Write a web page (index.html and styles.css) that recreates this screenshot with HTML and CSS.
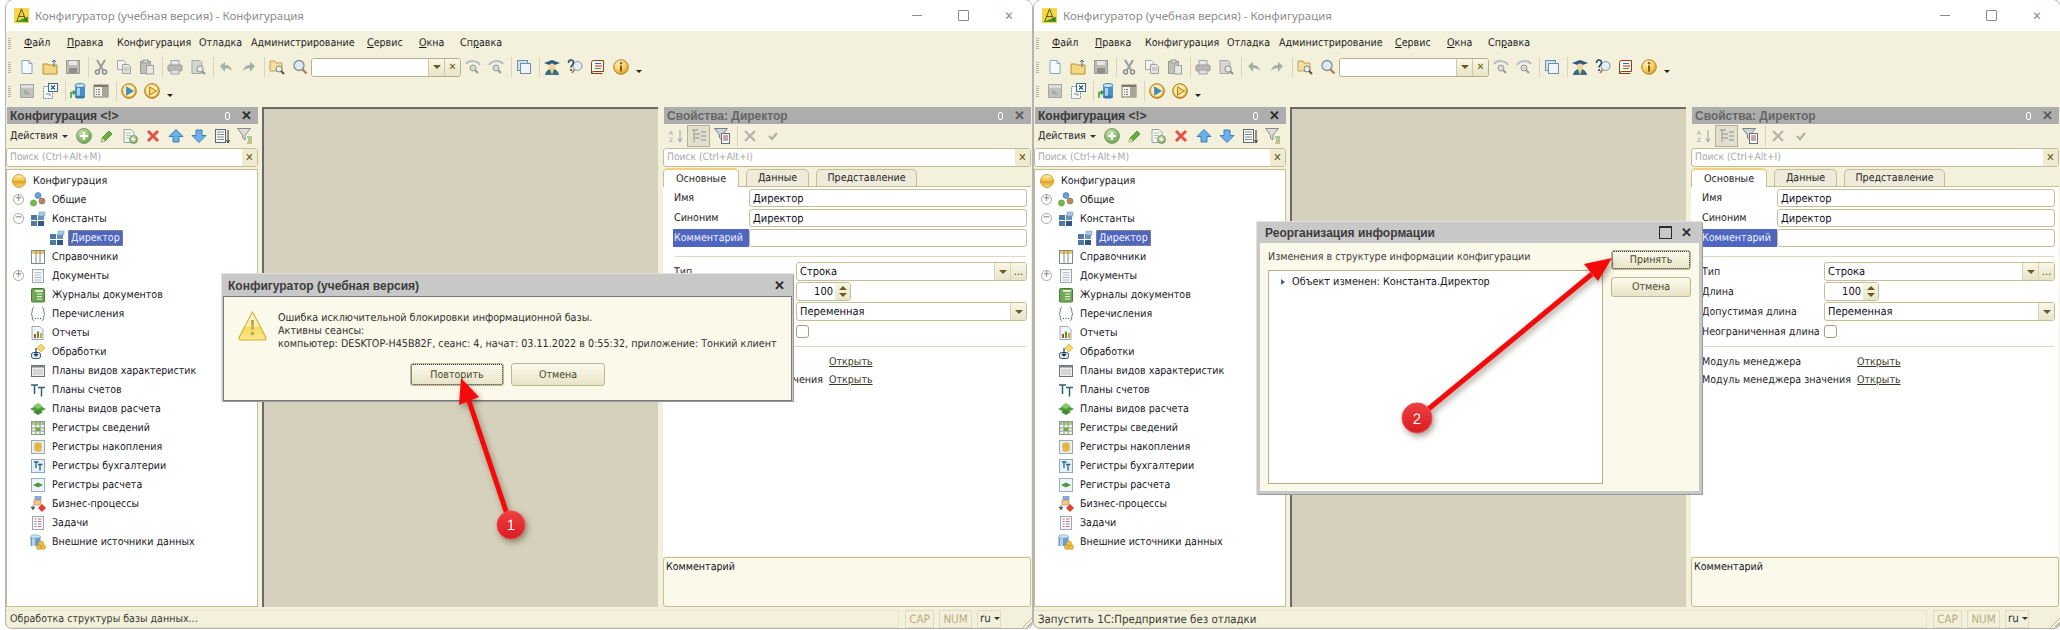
FILE: index.html
```html
<!DOCTYPE html>
<html>
<head>
  <meta charset="utf-8">
  <title>Конфигуратор</title>
  <link rel="stylesheet" href="styles.css">
</head>
<body>

<!-- icon sprite -->
<svg class="sprite" xmlns="http://www.w3.org/2000/svg">
  <defs>
    <radialGradient id="gold" cx="0.4" cy="0.3" r="0.8"><stop offset="0" stop-color="#fff6c8"/><stop offset="0.6" stop-color="#f2c64e"/><stop offset="1" stop-color="#c98a1c"/></radialGradient>
    <radialGradient id="green" cx="0.4" cy="0.3" r="0.8"><stop offset="0" stop-color="#c8e8a8"/><stop offset="1" stop-color="#5f9a45"/></radialGradient>
    <linearGradient id="ball" x1="0" y1="0" x2="0" y2="1"><stop offset="0" stop-color="#fdf3c0"/><stop offset="0.5" stop-color="#f0c040"/><stop offset="0.55" stop-color="#e0a020"/><stop offset="1" stop-color="#f6dc80"/></linearGradient>
    <linearGradient id="warn" x1="0" y1="0" x2="0" y2="1"><stop offset="0" stop-color="#fff9d8"/><stop offset="0.5" stop-color="#fbf0b0"/><stop offset="0.55" stop-color="#f5dc60"/><stop offset="1" stop-color="#f8e68c"/></linearGradient>
    <linearGradient id="redball" x1="0" y1="0" x2="0" y2="1"><stop offset="0" stop-color="#ee4044"/><stop offset="1" stop-color="#d81c22"/></linearGradient>
  </defs>
  <symbol id="i-logo" viewBox="0 0 16 16"><rect width="16" height="16" fill="#f4d84a"/><path d="M1 15 15 15 15 9 8 12z" fill="#4a9a20"/><path d="M8 1 3 14M8 1l5 13M5 9h6" stroke="#5a4a10" fill="none"/></symbol>
  <symbol id="i-new" viewBox="0 0 16 16"><path d="M3 1.5h7l3 3v10H3z" fill="#f6fafd" stroke="#8aa6bf"/><path d="M10 1.5v3h3" fill="#dbe7f1" stroke="#8aa6bf"/></symbol>
  <symbol id="i-open" viewBox="0 0 16 16"><path d="M1 5h5l1 1h8v9H1z" fill="#f3d680" stroke="#b5923a"/><path d="M12 8V1M10 3l2-2 2 2" stroke="#3f6f8f" fill="none"/></symbol>
  <symbol id="i-save" viewBox="0 0 16 16"><rect x="1.5" y="1.5" width="13" height="13" fill="#bcbcb4" stroke="#9a9a94"/><rect x="4" y="2" width="8" height="4" fill="#e6e6e0"/><rect x="4" y="9" width="8" height="5" fill="#8f8f8a"/></symbol>
  <symbol id="i-cut" viewBox="0 0 16 16"><path d="M4 1l6 10M12 1 6 11" stroke="#9c9c9c" stroke-width="2" fill="none"/><circle cx="4.5" cy="13" r="2" fill="none" stroke="#8c8c94" stroke-width="1.5"/><circle cx="11.5" cy="13" r="2" fill="none" stroke="#8c8c94" stroke-width="1.5"/></symbol>
  <symbol id="i-copy" viewBox="0 0 16 16"><path d="M1.5 1.5h6l2 2v7h-8z" fill="#f2f2ee" stroke="#a8a8a8"/><path d="M6.5 5.5h6l2 2v7h-8z" fill="#e4e4e0" stroke="#a0a0a0"/><path d="M8 9h5M8 11h5" stroke="#b0b0b0"/></symbol>
  <symbol id="i-paste" viewBox="0 0 16 16"><rect x="1.5" y="2.5" width="10" height="12" fill="#c0c0b8" stroke="#9c9c96"/><rect x="4" y="1" width="5" height="3" fill="#d8d8d4" stroke="#9c9c96"/><rect x="7.5" y="6.5" width="7" height="8.5" fill="#e6e6e2" stroke="#a0a0a0"/></symbol>
  <symbol id="i-print" viewBox="0 0 16 16"><rect x="4" y="1.5" width="8" height="5" fill="#e8e8e4" stroke="#a4a4a4"/><rect x="1" y="6" width="14" height="6" rx="1" fill="#b8b8b4" stroke="#9a9a98"/><rect x="4" y="11" width="8" height="4" fill="#e0e0dc" stroke="#a4a4a4"/></symbol>
  <symbol id="i-preview" viewBox="0 0 16 16"><path d="M2 1.5h8l2 2v11H2z" fill="#d6d6d2" stroke="#a8a8a8"/><circle cx="10" cy="10" r="3.2" fill="#e8e8e4" stroke="#8c8c8c"/><path d="M12.5 12.5 15 15" stroke="#8c8c8c" stroke-width="2"/></symbol>
  <symbol id="i-undo" viewBox="0 0 16 16"><path d="M2 7l5-4v3c4 0 6 2 7 6-2-2-4-3-7-2.500V13z" fill="#a6b0a6"/></symbol>
  <symbol id="i-redo" viewBox="0 0 16 16"><path d="M14 7 9 3v3c-4 0-6 2-7 6 2-2 4-3 7-2.500V13z" fill="#a6b0a6"/></symbol>
  <symbol id="i-find" viewBox="0 0 16 16"><path d="M1 2h5l1 2h6v8H1z" fill="#f3e0a0" stroke="#c0a050"/><circle cx="10" cy="10" r="3" fill="#e8f0f4" stroke="#808080"/><path d="M12 12l3 3" stroke="#705030" stroke-width="2"/></symbol>
  <symbol id="i-search" viewBox="0 0 16 16"><circle cx="7" cy="6.500" r="5" fill="#dceaf6" stroke="#8a8a90" stroke-width="1.300"/><path d="M10.500 10.500l4 4" stroke="#b08050" stroke-width="2.400"/></symbol>
  <symbol id="i-prev" viewBox="0 0 16 16"><path d="M1 5C4 1 12 1 15 6" fill="none" stroke="#b4bcc4" stroke-width="2"/><circle cx="8" cy="9" r="3" fill="#d8d8d8" stroke="#989898"/><path d="M10 11l3 3" stroke="#989898" stroke-width="2"/></symbol>
  <symbol id="i-next" viewBox="0 0 16 16"><path d="M15 5C12 1 4 1 1 6" fill="none" stroke="#b4bcc4" stroke-width="2"/><circle cx="8" cy="9" r="3" fill="#d8d8d8" stroke="#989898"/><path d="M10 11l3 3" stroke="#989898" stroke-width="2"/></symbol>
  <symbol id="i-win" viewBox="0 0 16 16"><rect x="1.500" y="1.500" width="10" height="10" fill="#cfe0ee" stroke="#6f8fa8"/><rect x="4.500" y="4.500" width="10" height="10" fill="#eef4f9" stroke="#6f8fa8"/></symbol>
  <symbol id="i-scholar" viewBox="0 0 16 16"><path d="M0 4 8 1l8 3-8 3z" fill="#2a5a78"/><circle cx="8" cy="7.500" r="3" fill="#f4d2a8"/><path d="M1 16c1-5 4-6 7-6s6 1 7 6z" fill="#3a6a88"/><path d="M6 10l2 6 2-6z" fill="#f4e060"/></symbol>
  <symbol id="i-helpfind" viewBox="0 0 16 16"><circle cx="10.500" cy="7" r="4.500" fill="#e0ecf6" stroke="#909090"/><path d="M7.500 10.500 5 14" stroke="#b08050" stroke-width="2"/><path d="M1.500 4C1.500 0 6.500 0 6.500 3.500 6.500 6 4 6 4 8.500M4 10v2" stroke="#2a4a68" stroke-width="1.600" fill="none"/></symbol>
  <symbol id="i-book" viewBox="0 0 16 16"><path d="M3.500 1.500h10v11h-10a2 2 0 0 0-2 2v-11a2 2 0 0 1 2-2zM1.500 14.500h11" fill="#fbf6e8" stroke="#8a4020"/><path d="M5 4.500h6" stroke="#2a70c0"/><path d="M5 7h7" stroke="#c03030"/><path d="M5 9.500h6" stroke="#30a040"/></symbol>
  <symbol id="i-info" viewBox="0 0 16 16"><circle cx="8" cy="8" r="7.300" fill="url(#gold)" stroke="#b08840"/><rect x="7" y="6.500" width="2" height="6" fill="#8a5a10"/><circle cx="8" cy="4.300" r="1.200" fill="#8a5a10"/></symbol>
  <symbol id="i-treegrey" viewBox="0 0 16 16"><rect x="1.500" y="1.500" width="13" height="13" fill="#c2c2bc" stroke="#a6a6a2"/><rect x="2" y="2" width="12" height="3" fill="#dcdcd8"/><path d="M6 7v4h5M6 9h3" stroke="#9a9a96" fill="none"/></symbol>
  <symbol id="i-xdoc" viewBox="0 0 16 16"><path d="M1.500 3.500h9v12h-9z" fill="#f8fafa" stroke="#7a8c9a" stroke-dasharray="2 1"/><rect x="6.500" y="0.500" width="9" height="8" fill="#fff" stroke="#3a6a8a"/><path d="M9 2.500l4 4M13 2.500l-4 4" stroke="#2a5a7a" stroke-width="1.300"/><path d="M4 11h4v2" stroke="#808080" fill="none"/></symbol>
  <symbol id="i-db" viewBox="0 0 16 16"><rect x="5" y="2" width="10" height="12" fill="#4a90c8"/><rect x="7" y="2" width="3" height="12" fill="#a8d4ee"/><ellipse cx="10" cy="2.500" rx="5" ry="2" fill="#cfe8f6" stroke="#3f7fb0"/><ellipse cx="10" cy="14" rx="5" ry="1.500" fill="#3a78a8"/><path d="M1 15V9.500h3M3 7.500 5 9.500 3 11.500" stroke="#3c9a3c" stroke-width="1.500" fill="none"/></symbol>
  <symbol id="i-layout" viewBox="0 0 16 16"><rect x="1" y="2" width="14" height="12" fill="#f2f2ea" stroke="#7a7a70"/><rect x="1" y="2" width="14" height="2" fill="#807868"/><rect x="9" y="4" width="6" height="10" fill="#a8a498"/><path d="M3 6.500h1M5 6.500h2M3 9h1M5 9h2M3 11.500h1M5 11.500h2" stroke="#707068"/></symbol>
  <symbol id="i-play" viewBox="0 0 16 16"><circle cx="8" cy="8" r="7.300" fill="url(#gold)" stroke="#a87820"/><circle cx="8" cy="8" r="5.500" fill="#fdf0b8"/><path d="M5.500 3.800v8.400L12.500 8z" fill="#3f8fd0" stroke="#2868a0" stroke-width="0.500"/></symbol>
  <symbol id="i-play2" viewBox="0 0 16 16"><circle cx="8" cy="8" r="7.300" fill="url(#gold)" stroke="#a87820"/><circle cx="8" cy="8" r="5.500" fill="#fdf0b8"/><path d="M5.500 3.800v8.400L12.500 8z" fill="#f6d868" stroke="#b08020"/></symbol>
  <symbol id="i-plus" viewBox="0 0 16 16"><circle cx="8" cy="8" r="7.500" fill="url(#green)" stroke="#8a9a80"/><path d="M8 4v8M4 8h8" stroke="#fff" stroke-width="2.200"/></symbol>
  <symbol id="i-pencil" viewBox="0 0 16 16"><path d="M2 14l1-4 7-7 3 3-7 7z" fill="#68b040" stroke="#3f7f28" stroke-width="0.800"/><path d="M2 14l1-4 3 3z" fill="#f4e0a8"/></symbol>
  <symbol id="i-docplus" viewBox="0 0 16 16"><path d="M2 1.500h7l3 3v10H2z" fill="#f4f6f4" stroke="#9aa49a"/><path d="M4 5h5M4 7.500h5M4 10h3" stroke="#b8c0b8"/><circle cx="11.500" cy="11.500" r="4" fill="url(#green)" stroke="#8a9a80"/><path d="M11.500 9.500v4M9.500 11.500h4" stroke="#fff" stroke-width="1.300"/></symbol>
  <symbol id="i-x" viewBox="0 0 16 16"><path d="M3 3l10 10M13 3 3 13" stroke="#e4504a" stroke-width="3"/></symbol>
  <symbol id="i-up" viewBox="0 0 16 16"><path d="M8 1.500 15 8.500H11V14H5V8.500H1z" fill="#6cb0e8" stroke="#3f7eb8"/></symbol>
  <symbol id="i-down" viewBox="0 0 16 16"><path d="M8 14.500 15 7.500H11V2H5V7.500H1z" fill="#6cb0e8" stroke="#3f7eb8"/></symbol>
  <symbol id="i-list" viewBox="0 0 16 16"><rect x="1.500" y="1.500" width="10" height="13" fill="#fbfbf8" stroke="#5a6a70"/><path d="M3 4h7M3 6.500h7M3 9h7M3 11.500h7" stroke="#7a8a90"/><path d="M14 2v12M12.500 12 14 15 15.500 12" stroke="#303030" fill="none"/></symbol>
  <symbol id="i-filter" viewBox="0 0 16 16"><path d="M0.500 0.500h13L8 7v5L5.500 10V7z" fill="#dcdcd8" stroke="#8a8a88"/><path d="M10 9h5M11 11h4M11 13h4" stroke="#5fa050"/><path d="M10 15h5" stroke="#c08030"/></symbol>
  <symbol id="i-az" viewBox="0 0 16 16"><path d="M12 2v11M10 10.500 12 14 14 10.500" stroke="#9aa0a0" fill="none"/></symbol>
  <symbol id="i-treegrid" viewBox="0 0 16 16"><path d="M1 2h6M3 2v12M3 6h6M3 10h6M10 4h5M10 8h5M10 12h5" stroke="#a4aaa8" stroke-width="1.300" fill="none"/></symbol>
  <symbol id="i-filterdoc" viewBox="0 0 16 16"><path d="M0.500 0.500h13L8 7v5L5.500 10V7z" fill="#cfd4d8" stroke="#7a8088"/><rect x="7.500" y="5.500" width="8" height="10" fill="#fff" stroke="#6a7078"/><path d="M9 8h5M9 10h5" stroke="#c04040"/><path d="M9 12h5" stroke="#4060a0"/></symbol>
  <symbol id="i-xgrey" viewBox="0 0 16 16"><path d="M3 3l10 10M13 3 3 13" stroke="#b8b0ac" stroke-width="2.200"/></symbol>
  <symbol id="i-check" viewBox="0 0 16 16"><path d="M4 8l3 3 5-6" stroke="#a8b8a4" stroke-width="2.200" fill="none"/></symbol>
  <symbol id="i-conf" viewBox="0 0 16 16"><circle cx="8" cy="8" r="6.500" fill="url(#ball)" stroke="#caa040"/></symbol>
  <symbol id="i-common" viewBox="0 0 16 16"><circle cx="8" cy="3.500" r="3" fill="#68a0d8" stroke="#4878a8" stroke-width="0.600"/><circle cx="3.500" cy="11" r="3" fill="#70c050" stroke="#4a9030" stroke-width="0.600"/><circle cx="12" cy="9" r="3" fill="#b88860" stroke="#8a6040" stroke-width="0.600"/></symbol>
  <symbol id="i-const" viewBox="0 0 16 16"><rect x="1" y="4" width="6" height="5" fill="#5078a0"/><rect x="1" y="10" width="6" height="5" fill="#5078a0"/><rect x="8" y="4" width="6" height="5" fill="#6a94bc"/><rect x="8" y="10" width="6" height="5" fill="#2f5a88"/><rect x="9" y="1" width="6" height="4" fill="#a8c8e4" stroke="#6a94bc" stroke-width="0.500"/></symbol>
  <symbol id="i-cat" viewBox="0 0 16 16"><rect x="1.500" y="1.500" width="13" height="13" fill="#fff" stroke="#7a8a90"/><rect x="2" y="2" width="12" height="3" fill="#f0cc60"/><path d="M6 2v12M10 2v12" stroke="#7a8a90"/></symbol>
  <symbol id="i-docs" viewBox="0 0 16 16"><rect x="2.500" y="1.500" width="11" height="13" fill="#f4f6f8" stroke="#9aa8b4"/><path d="M4.500 4.500h7M4.500 7h7M4.500 9.500h7M4.500 12h7" stroke="#b4c0c8"/></symbol>
  <symbol id="i-journal" viewBox="0 0 16 16"><rect x="1.500" y="1.500" width="13" height="13.500" rx="1" fill="#70a858" stroke="#467a38"/><rect x="5" y="3" width="8" height="2" fill="#dcecc8"/><path d="M7 7h5M7 9.500h5M7 12h5" stroke="#e4f0d8"/></symbol>
  <symbol id="i-enum" viewBox="0 0 16 16"><path d="M4 1.500C1.500 1.500 3 7 1 8c2 1 .5 6.500 3 6.500M12 1.500C14.500 1.500 13 7 15 8c-2 1-.5 6.500-3 6.500" stroke="#5a7080" fill="none"/><path d="M5 12.500h1M7.500 12.500h1M10 12.500h1" stroke="#3a4a58"/></symbol>
  <symbol id="i-report" viewBox="0 0 16 16"><path d="M2 1.500h8l3 3v10H2z" fill="#f4f6f8" stroke="#98a8b8"/><rect x="4" y="9" width="2" height="4" fill="#d04030"/><rect x="7" y="6.500" width="2" height="6.500" fill="#40a040"/><rect x="10" y="8" width="2" height="5" fill="#e0a030"/></symbol>
  <symbol id="i-proc" viewBox="0 0 16 16"><path d="M11 0l4 4-4 4-4-4z" fill="#f4d860" stroke="#c8a030" stroke-width="0.600"/><rect x="1.500" y="8.500" width="9" height="6" rx="2" fill="#dce8f0" stroke="#305878"/><path d="M6 4v8M4 10l2 2 2-2" stroke="#203850" stroke-width="1.200" fill="none"/></symbol>
  <symbol id="i-pvh" viewBox="0 0 16 16"><rect x="1.500" y="2.500" width="13" height="11" fill="#eeeeea" stroke="#6a7078"/><rect x="1.500" y="2.500" width="13" height="2" fill="#7a8490"/><path d="M4 6.500v6M6 6.500v6M8 6.500v6M10 6.500v6M12 6.500v6" stroke="#8a9098" stroke-dasharray="1 1"/></symbol>
  <symbol id="i-chart" viewBox="0 0 16 16"><path d="M1 3h7M4.500 3v9M8 5.500h7M11.500 5.500v9" stroke="#2f6080" stroke-width="1.500" fill="none"/></symbol>
  <symbol id="i-calc" viewBox="0 0 16 16"><path d="M0 8l8-4 8 4-8 4z" fill="#4f9a40"/><path d="M3 5l5-3 5 3-5 3z" fill="#8ac868"/><path d="M3 11l5-2 5 2-5 3z" fill="#3f8a30"/></symbol>
  <symbol id="i-regs" viewBox="0 0 16 16"><rect x="1.500" y="1.500" width="13" height="13" fill="#eef4e4" stroke="#8a9a88"/><rect x="2" y="2" width="12" height="3" fill="#a8c890"/><path d="M6 2v12M10 2v12M2 8h12M2 11h12" stroke="#8a9a88"/><rect x="6" y="8" width="4" height="3" fill="#70a850"/></symbol>
  <symbol id="i-regn" viewBox="0 0 16 16"><rect x="1.500" y="1.500" width="13" height="13" fill="#e8f0f6" stroke="#9aaab8"/><ellipse cx="8" cy="5.500" rx="3.500" ry="1.800" fill="#f0c040" stroke="#c09020" stroke-width="0.500"/><ellipse cx="8" cy="8" rx="3.500" ry="1.800" fill="#f0c040" stroke="#c09020" stroke-width="0.500"/><ellipse cx="8" cy="10.500" rx="3.500" ry="1.800" fill="#f0c040" stroke="#c09020" stroke-width="0.500"/></symbol>
  <symbol id="i-regb" viewBox="0 0 16 16"><rect x="1.500" y="1.500" width="13" height="13" fill="#e4f0f8" stroke="#8aa8c0"/><path d="M4 4h4.500M6 4v6M8 6.500h4.500M10 6.500v6" stroke="#2f6080" stroke-width="1.300" fill="none"/></symbol>
  <symbol id="i-regr" viewBox="0 0 16 16"><rect x="1.500" y="1.500" width="13" height="13" fill="#eef4f8" stroke="#9ab0c0"/><path d="M3 8l5-2.500L13 8l-5 2.500z" fill="#4f9a40"/></symbol>
  <symbol id="i-bp" viewBox="0 0 16 16"><rect x="5" y="0.500" width="6" height="3" fill="#80b0e0" stroke="#5080b0" stroke-width="0.500"/><rect x="4" y="4" width="7" height="5" fill="#f6c890" stroke="#b08050" stroke-width="0.600"/><path d="M3 9v3M1 11l2 3 2-3z" fill="#505a68" stroke="#505a68" stroke-width="0.600"/><path d="M12 8l4 4-4 4-4-4z" fill="#e04030"/></symbol>
  <symbol id="i-task" viewBox="0 0 16 16"><rect x="2.500" y="1.500" width="11" height="13" fill="#f6f8fa" stroke="#9aa8b8"/><path d="M4.500 4h2M8 4h3.500M4.500 6.500h2M8 6.500h3.500M4.500 9h2M8 9h3.500M4.500 11.500h2M8 11.500h3.500" stroke="#c07080"/></symbol>
  <symbol id="i-ext" viewBox="0 0 16 16"><rect x="0.500" y="2" width="10" height="10" fill="#6a9ccc"/><rect x="2" y="2" width="3" height="10" fill="#b4d4ec"/><ellipse cx="5.500" cy="2.500" rx="5" ry="1.800" fill="#cce0f0" stroke="#5a8cb8" stroke-width="0.500"/><circle cx="9" cy="13" r="2.500" fill="#f0c040" stroke="#b08020" stroke-width="0.500"/><circle cx="13" cy="13" r="2.500" fill="#f0c040" stroke="#b08020" stroke-width="0.500"/><circle cx="11" cy="9.500" r="2.500" fill="#f0c040" stroke="#b08020" stroke-width="0.500"/></symbol>
  <symbol id="i-warn" viewBox="0 0 29 30"><path d="M14.500 1 28 26.500a2 2 0 0 1-2 2.500H3a2 2 0 0 1-2-2.500z" fill="url(#warn)" stroke="#d8b040" stroke-width="1.200" stroke-linejoin="round"/><path d="M13 9h3l-.7 10h-1.600z" fill="#b8a050"/><circle cx="14.500" cy="22.500" r="1.800" fill="#b8a050"/></symbol>
</svg>

<!-- window 1 -->
<div class="window first">
  <div class="titlebar">
    <svg class="logo"><use href="#i-logo"/></svg>
    <span class="title-text">Конфигуратор (учебная версия) - Конфигурация</span>
    <span class="win-btn min"></span><span class="win-btn max"></span><span class="win-btn close">✕</span>
  </div>
  <div class="menubar">
    <span class="grip"></span>
    <span class="menu-item"><u>Ф</u>айл</span><span class="menu-item"><u>П</u>равка</span><span class="menu-item">Конфигурация</span><span class="menu-item">Отладка</span><span class="menu-item">Администрирование</span><span class="menu-item"><u>С</u>ервис</span><span class="menu-item"><u>О</u>кна</span><span class="menu-item">Сп<u>р</u>авка</span>
  </div>
  <div class="toolbar">
    <span class="grip"></span>
    <span class="tb"><svg class="ic"><use href="#i-new"/></svg></span><span class="tb"><svg class="ic"><use href="#i-open"/></svg></span><span class="tb"><svg class="ic"><use href="#i-save"/></svg></span><span class="sep"></span>
    <span class="tb"><svg class="ic"><use href="#i-cut"/></svg></span><span class="tb"><svg class="ic"><use href="#i-copy"/></svg></span><span class="tb"><svg class="ic"><use href="#i-paste"/></svg></span><span class="sep"></span>
    <span class="tb"><svg class="ic"><use href="#i-print"/></svg></span><span class="tb"><svg class="ic"><use href="#i-preview"/></svg></span><span class="sep"></span>
    <span class="tb"><svg class="ic"><use href="#i-undo"/></svg></span><span class="tb"><svg class="ic"><use href="#i-redo"/></svg></span><span class="sep"></span>
    <span class="tb"><svg class="ic"><use href="#i-find"/></svg></span><span class="tb"><svg class="ic"><use href="#i-search"/></svg></span>
    <span class="combo"><span class="combo-input"></span><span class="combo-btn"><span class="arrow"></span></span><span class="combo-btn x">✕</span></span>
    <span class="tb"><svg class="ic"><use href="#i-prev"/></svg></span><span class="tb"><svg class="ic"><use href="#i-next"/></svg></span><span class="sep"></span>
    <span class="tb"><svg class="ic"><use href="#i-win"/></svg></span><span class="sep"></span>
    <span class="tb"><svg class="ic"><use href="#i-scholar"/></svg></span><span class="tb"><svg class="ic"><use href="#i-helpfind"/></svg></span><span class="tb"><svg class="ic"><use href="#i-book"/></svg></span><span class="tb"><svg class="ic"><use href="#i-info"/></svg></span><span class="more"></span>
  </div>
  <div class="toolbar tall">
    <span class="grip"></span>
    <span class="tb"><svg class="ic"><use href="#i-treegrey"/></svg></span><span class="tb"><svg class="ic"><use href="#i-xdoc"/></svg></span><span class="sep"></span>
    <span class="tb"><svg class="ic"><use href="#i-db"/></svg></span><span class="tb"><svg class="ic"><use href="#i-layout"/></svg></span><span class="sep"></span>
    <span class="tb"><svg class="ic"><use href="#i-play"/></svg></span><span class="tb"><svg class="ic"><use href="#i-play2"/></svg></span><span class="more"></span>
  </div>
  <div class="workspace">
    <div class="pane left-pane">
      <div class="pane-head"><span>Конфигурация &lt;!&gt;</span><span class="pin"></span><span class="pane-x">✕</span></div>
      <div class="pane-tools">
        <span class="actions">Действия<span class="arrow"></span></span>
        <span class="tb"><svg class="ic"><use href="#i-plus"/></svg></span><span class="tb"><svg class="ic"><use href="#i-pencil"/></svg></span><span class="tb"><svg class="ic"><use href="#i-docplus"/></svg></span><span class="tb"><svg class="ic"><use href="#i-x"/></svg></span><span class="tb"><svg class="ic"><use href="#i-up"/></svg></span><span class="tb"><svg class="ic"><use href="#i-down"/></svg></span><span class="tb"><svg class="ic"><use href="#i-list"/></svg></span><span class="tb"><svg class="ic"><use href="#i-filter"/></svg></span>
      </div>
      <div class="search"><span class="search-text">Поиск (Ctrl+Alt+M)</span><span class="search-x">✕</span></div>
      <div class="tree">
        <div class="row"><svg class="ic"><use href="#i-conf"/></svg>Конфигурация</div>
        <div class="row lvl1"><span class="toggle">+</span><svg class="ic"><use href="#i-common"/></svg>Общие</div>
        <div class="row lvl1"><span class="toggle">−</span><svg class="ic"><use href="#i-const"/></svg>Константы</div>
        <div class="row lvl2"><svg class="ic"><use href="#i-const"/></svg><span class="selected">Директор</span></div>
        <div class="row lvl1"><svg class="ic"><use href="#i-cat"/></svg>Справочники</div>
        <div class="row lvl1"><span class="toggle">+</span><svg class="ic"><use href="#i-docs"/></svg>Документы</div>
        <div class="row lvl1"><svg class="ic"><use href="#i-journal"/></svg>Журналы документов</div>
        <div class="row lvl1"><svg class="ic"><use href="#i-enum"/></svg>Перечисления</div>
        <div class="row lvl1"><svg class="ic"><use href="#i-report"/></svg>Отчеты</div>
        <div class="row lvl1"><svg class="ic"><use href="#i-proc"/></svg>Обработки</div>
        <div class="row lvl1"><svg class="ic"><use href="#i-pvh"/></svg>Планы видов характеристик</div>
        <div class="row lvl1"><svg class="ic"><use href="#i-chart"/></svg>Планы счетов</div>
        <div class="row lvl1"><svg class="ic"><use href="#i-calc"/></svg>Планы видов расчета</div>
        <div class="row lvl1"><svg class="ic"><use href="#i-regs"/></svg>Регистры сведений</div>
        <div class="row lvl1"><svg class="ic"><use href="#i-regn"/></svg>Регистры накопления</div>
        <div class="row lvl1"><svg class="ic"><use href="#i-regb"/></svg>Регистры бухгалтерии</div>
        <div class="row lvl1"><svg class="ic"><use href="#i-regr"/></svg>Регистры расчета</div>
        <div class="row lvl1"><svg class="ic"><use href="#i-bp"/></svg>Бизнес-процессы</div>
        <div class="row lvl1"><svg class="ic"><use href="#i-task"/></svg>Задачи</div>
        <div class="row lvl1"><svg class="ic"><use href="#i-ext"/></svg>Внешние источники данных</div>
      </div>
    </div>
    <div class="mdi"></div>
    <div class="pane right-pane">
      <div class="pane-head inactive"><span>Свойства: Директор</span><span class="pin"></span><span class="pane-x">✕</span></div>
      <div class="pane-tools">
        <span class="tb"><svg class="ic" viewBox="0 0 16 16"><use href="#i-az"/><text class="az" x="1" y="6.500">A</text><text class="az" x="1" y="13.500">Z</text></svg></span><span class="tb pressed"><svg class="ic"><use href="#i-treegrid"/></svg></span><span class="tb"><svg class="ic"><use href="#i-filterdoc"/></svg></span><span class="sep"></span>
        <span class="tb"><svg class="ic"><use href="#i-xgrey"/></svg></span><span class="tb"><svg class="ic"><use href="#i-check"/></svg></span>
      </div>
      <div class="search"><span class="search-text">Поиск (Ctrl+Alt+I)</span><span class="search-x">✕</span></div>
      <div class="tabs"><span class="tab active">Основные</span><span class="tab data">Данные</span><span class="tab view">Представление</span></div>
      <div class="form">
        <div class="frow"><span class="flabel">Имя</span><span class="field wide">Директор</span></div>
        <div class="frow"><span class="flabel">Синоним</span><span class="field wide">Директор</span></div>
        <div class="frow"><span class="flabel hilite">Комментарий</span><span class="field wide"></span></div>
        <div class="hr"></div>
        <div class="frow low"><span class="flabel long">Тип</span><span class="field grow">Строка<span class="field-btn end"><span class="arrow"></span></span><span class="field-btn dots">...</span></span></div>
        <div class="frow low"><span class="flabel long">Длина</span><span class="field spin">100<span class="spin-btn"><span class="arrow up"></span><span class="arrow"></span></span></span></div>
        <div class="frow low"><span class="flabel long">Допустимая длина</span><span class="field grow">Переменная<span class="field-btn end"><span class="arrow"></span></span></span></div>
        <div class="frow low"><span class="flabel long">Неограниченная длина</span><span class="check"></span></div>
        <div class="hr second"></div>
        <div class="frow link-row"><span class="flabel link-label">Модуль менеджера</span><a class="link">Открыть</a></div>
        <div class="frow link-row"><span class="flabel link-label">Модуль менеджера значения</span><a class="link">Открыть</a></div>
      </div>
      <div class="comment">Комментарий</div>
    </div>
  </div>
  <div class="statusbar">
    <span class="status-text">Обработка структуры базы данных...</span>
    <span class="status-box cap">CAP</span><span class="status-box num">NUM</span><span class="status-box lang">ru<span class="arrow"></span></span>
    <span class="sizegrip"></span>
  </div>

  <div class="dialog alert">
    <div class="dialog-head"><span>Конфигуратор (учебная версия)</span><span class="dialog-x">✕</span></div>
    <div class="dialog-body">
      <div class="alert-msg">
        <svg class="warn-ic"><use href="#i-warn"/></svg>
        <div class="alert-text">Ошибка исключительной блокировки информационной базы.<br>Активны сеансы:<br>компьютер: DESKTOP-H45B82F, сеанс: 4, начат: 03.11.2022 в 0:55:32, приложение: Тонкий клиент</div>
      </div>
      <div class="alert-btns"><span class="btn focus">Повторить</span><span class="btn">Отмена</span></div>
    </div>
  </div>
</div>

<!-- window 2 -->
<div class="window second">
  <div class="titlebar">
    <svg class="logo"><use href="#i-logo"/></svg>
    <span class="title-text">Конфигуратор (учебная версия) - Конфигурация</span>
    <span class="win-btn min"></span><span class="win-btn max"></span><span class="win-btn close">✕</span>
  </div>
  <div class="menubar">
    <span class="grip"></span>
    <span class="menu-item"><u>Ф</u>айл</span><span class="menu-item"><u>П</u>равка</span><span class="menu-item">Конфигурация</span><span class="menu-item">Отладка</span><span class="menu-item">Администрирование</span><span class="menu-item"><u>С</u>ервис</span><span class="menu-item"><u>О</u>кна</span><span class="menu-item">Сп<u>р</u>авка</span>
  </div>
  <div class="toolbar">
    <span class="grip"></span>
    <span class="tb"><svg class="ic"><use href="#i-new"/></svg></span><span class="tb"><svg class="ic"><use href="#i-open"/></svg></span><span class="tb"><svg class="ic"><use href="#i-save"/></svg></span><span class="sep"></span>
    <span class="tb"><svg class="ic"><use href="#i-cut"/></svg></span><span class="tb"><svg class="ic"><use href="#i-copy"/></svg></span><span class="tb"><svg class="ic"><use href="#i-paste"/></svg></span><span class="sep"></span>
    <span class="tb"><svg class="ic"><use href="#i-print"/></svg></span><span class="tb"><svg class="ic"><use href="#i-preview"/></svg></span><span class="sep"></span>
    <span class="tb"><svg class="ic"><use href="#i-undo"/></svg></span><span class="tb"><svg class="ic"><use href="#i-redo"/></svg></span><span class="sep"></span>
    <span class="tb"><svg class="ic"><use href="#i-find"/></svg></span><span class="tb"><svg class="ic"><use href="#i-search"/></svg></span>
    <span class="combo"><span class="combo-input"></span><span class="combo-btn"><span class="arrow"></span></span><span class="combo-btn x">✕</span></span>
    <span class="tb"><svg class="ic"><use href="#i-prev"/></svg></span><span class="tb"><svg class="ic"><use href="#i-next"/></svg></span><span class="sep"></span>
    <span class="tb"><svg class="ic"><use href="#i-win"/></svg></span><span class="sep"></span>
    <span class="tb"><svg class="ic"><use href="#i-scholar"/></svg></span><span class="tb"><svg class="ic"><use href="#i-helpfind"/></svg></span><span class="tb"><svg class="ic"><use href="#i-book"/></svg></span><span class="tb"><svg class="ic"><use href="#i-info"/></svg></span><span class="more"></span>
  </div>
  <div class="toolbar tall">
    <span class="grip"></span>
    <span class="tb"><svg class="ic"><use href="#i-treegrey"/></svg></span><span class="tb"><svg class="ic"><use href="#i-xdoc"/></svg></span><span class="sep"></span>
    <span class="tb"><svg class="ic"><use href="#i-db"/></svg></span><span class="tb"><svg class="ic"><use href="#i-layout"/></svg></span><span class="sep"></span>
    <span class="tb"><svg class="ic"><use href="#i-play"/></svg></span><span class="tb"><svg class="ic"><use href="#i-play2"/></svg></span><span class="more"></span>
  </div>
  <div class="workspace">
    <div class="pane left-pane">
      <div class="pane-head"><span>Конфигурация &lt;!&gt;</span><span class="pin"></span><span class="pane-x">✕</span></div>
      <div class="pane-tools">
        <span class="actions">Действия<span class="arrow"></span></span>
        <span class="tb"><svg class="ic"><use href="#i-plus"/></svg></span><span class="tb"><svg class="ic"><use href="#i-pencil"/></svg></span><span class="tb"><svg class="ic"><use href="#i-docplus"/></svg></span><span class="tb"><svg class="ic"><use href="#i-x"/></svg></span><span class="tb"><svg class="ic"><use href="#i-up"/></svg></span><span class="tb"><svg class="ic"><use href="#i-down"/></svg></span><span class="tb"><svg class="ic"><use href="#i-list"/></svg></span><span class="tb"><svg class="ic"><use href="#i-filter"/></svg></span>
      </div>
      <div class="search"><span class="search-text">Поиск (Ctrl+Alt+M)</span><span class="search-x">✕</span></div>
      <div class="tree">
        <div class="row"><svg class="ic"><use href="#i-conf"/></svg>Конфигурация</div>
        <div class="row lvl1"><span class="toggle">+</span><svg class="ic"><use href="#i-common"/></svg>Общие</div>
        <div class="row lvl1"><span class="toggle">−</span><svg class="ic"><use href="#i-const"/></svg>Константы</div>
        <div class="row lvl2"><svg class="ic"><use href="#i-const"/></svg><span class="selected">Директор</span></div>
        <div class="row lvl1"><svg class="ic"><use href="#i-cat"/></svg>Справочники</div>
        <div class="row lvl1"><span class="toggle">+</span><svg class="ic"><use href="#i-docs"/></svg>Документы</div>
        <div class="row lvl1"><svg class="ic"><use href="#i-journal"/></svg>Журналы документов</div>
        <div class="row lvl1"><svg class="ic"><use href="#i-enum"/></svg>Перечисления</div>
        <div class="row lvl1"><svg class="ic"><use href="#i-report"/></svg>Отчеты</div>
        <div class="row lvl1"><svg class="ic"><use href="#i-proc"/></svg>Обработки</div>
        <div class="row lvl1"><svg class="ic"><use href="#i-pvh"/></svg>Планы видов характеристик</div>
        <div class="row lvl1"><svg class="ic"><use href="#i-chart"/></svg>Планы счетов</div>
        <div class="row lvl1"><svg class="ic"><use href="#i-calc"/></svg>Планы видов расчета</div>
        <div class="row lvl1"><svg class="ic"><use href="#i-regs"/></svg>Регистры сведений</div>
        <div class="row lvl1"><svg class="ic"><use href="#i-regn"/></svg>Регистры накопления</div>
        <div class="row lvl1"><svg class="ic"><use href="#i-regb"/></svg>Регистры бухгалтерии</div>
        <div class="row lvl1"><svg class="ic"><use href="#i-regr"/></svg>Регистры расчета</div>
        <div class="row lvl1"><svg class="ic"><use href="#i-bp"/></svg>Бизнес-процессы</div>
        <div class="row lvl1"><svg class="ic"><use href="#i-task"/></svg>Задачи</div>
        <div class="row lvl1"><svg class="ic"><use href="#i-ext"/></svg>Внешние источники данных</div>
      </div>
    </div>
    <div class="mdi"></div>
    <div class="pane right-pane">
      <div class="pane-head inactive"><span>Свойства: Директор</span><span class="pin"></span><span class="pane-x">✕</span></div>
      <div class="pane-tools">
        <span class="tb"><svg class="ic" viewBox="0 0 16 16"><use href="#i-az"/><text class="az" x="1" y="6.500">A</text><text class="az" x="1" y="13.500">Z</text></svg></span><span class="tb pressed"><svg class="ic"><use href="#i-treegrid"/></svg></span><span class="tb"><svg class="ic"><use href="#i-filterdoc"/></svg></span><span class="sep"></span>
        <span class="tb"><svg class="ic"><use href="#i-xgrey"/></svg></span><span class="tb"><svg class="ic"><use href="#i-check"/></svg></span>
      </div>
      <div class="search"><span class="search-text">Поиск (Ctrl+Alt+I)</span><span class="search-x">✕</span></div>
      <div class="tabs"><span class="tab active">Основные</span><span class="tab data">Данные</span><span class="tab view">Представление</span></div>
      <div class="form">
        <div class="frow"><span class="flabel">Имя</span><span class="field wide">Директор</span></div>
        <div class="frow"><span class="flabel">Синоним</span><span class="field wide">Директор</span></div>
        <div class="frow"><span class="flabel hilite">Комментарий</span><span class="field wide"></span></div>
        <div class="hr"></div>
        <div class="frow low"><span class="flabel long">Тип</span><span class="field grow">Строка<span class="field-btn end"><span class="arrow"></span></span><span class="field-btn dots">...</span></span></div>
        <div class="frow low"><span class="flabel long">Длина</span><span class="field spin">100<span class="spin-btn"><span class="arrow up"></span><span class="arrow"></span></span></span></div>
        <div class="frow low"><span class="flabel long">Допустимая длина</span><span class="field grow">Переменная<span class="field-btn end"><span class="arrow"></span></span></span></div>
        <div class="frow low"><span class="flabel long">Неограниченная длина</span><span class="check"></span></div>
        <div class="hr second"></div>
        <div class="frow link-row"><span class="flabel link-label">Модуль менеджера</span><a class="link">Открыть</a></div>
        <div class="frow link-row"><span class="flabel link-label">Модуль менеджера значения</span><a class="link">Открыть</a></div>
      </div>
      <div class="comment">Комментарий</div>
    </div>
  </div>
  <div class="statusbar">
    <span class="status-text">Запустить 1С:Предприятие без отладки</span>
    <span class="status-box cap">CAP</span><span class="status-box num">NUM</span><span class="status-box lang">ru<span class="arrow"></span></span>
    <span class="sizegrip"></span>
  </div>

  <div class="dialog reorg">
    <div class="dialog-head"><span>Реорганизация информации</span><span class="dialog-max"></span><span class="dialog-x">✕</span></div>
    <div class="reorg-body">
      <div class="reorg-main">
        <div class="reorg-label">Изменения в структуре информации конфигурации</div>
        <div class="reorg-list"><span class="tri"></span>Объект изменен: Константа.Директор</div>
      </div>
      <div class="reorg-btns"><span class="btn focus">Принять</span><span class="btn">Отмена</span></div>
    </div>
  </div>
</div>

<!-- arrows over everything -->
<svg class="callouts" width="2060" height="630" xmlns="http://www.w3.org/2000/svg">
  <g class="callout">
    <path d="M509 520 469 401" stroke="#f40a0a" stroke-width="5" fill="none"/>
    <path d="M461 378 479 397 459 405z" fill="#f40a0a"/>
    <circle cx="511" cy="525" r="14" fill="url(#redball)" stroke="#f04a4e"/>
    <text class="callout-num" x="511" y="530">1</text>
  </g>
  <g class="callout">
    <path d="M1420 416 1592 274" stroke="#f40a0a" stroke-width="5" fill="none"/>
    <path d="M1612 258 1598 281 1584 264z" fill="#f40a0a"/>
    <circle cx="1417" cy="418" r="15" fill="url(#redball)" stroke="#f04a4e"/>
    <text class="callout-num" x="1417" y="424">2</text>
  </g>
</svg>

</body>
</html>
```

FILE: styles.css
```css
html, body {
  margin: 0;
  padding: 0;
  background: #fff;
  width: 2060px;
  height: 630px;
  overflow: hidden;
}

body {
  position: relative;
  font-family: "DejaVu Sans Condensed", "Liberation Sans", sans-serif;
  font-size: 10.6px;
  text-rendering: geometricPrecision;
  color: #1e1e1e;
}

.sprite {
  position: absolute;
  width: 0;
  height: 0;
}

.ic {
  width: 16px;
  height: 16px;
  flex: none;
}

.az {
  font-family: "Liberation Mono", monospace;
  font-size: 6.5px;
  fill: #9aa0a0;
}

/* windows sit on a free desktop */
.window {
  position: absolute;
  top: 0;
  width: 1026px;
  height: 628px;
  display: flex;
  flex-direction: column;
  background: #f3f0dc;
  border-radius: 8px 8px 6px 6px;
  box-shadow: 0 0 0 1px #b4b4b4;
  overflow: hidden;
}

.window.first { left: 6px; }
.window.second { left: 1034px; }

.titlebar {
  height: 31px;
  flex: none;
  background: #fff;
  display: flex;
  align-items: center;
  padding-left: 8px;
}

.logo {
  width: 15px;
  height: 15px;
  margin-right: 6px;
}

.title-text {
  flex: 1;
  font-family: "Noto Sans", sans-serif;
  font-size: 11.5px;
  text-rendering: auto;
  color: #8c8c8c;
}

.win-btn {
  width: 46px;
  height: 31px;
  display: flex;
  align-items: center;
  justify-content: center;
  color: #8a8a8a;
  box-sizing: border-box;
}

.win-btn.min::before {
  content: "";
  width: 10px;
  height: 1px;
  background: #8a8a8a;
}

.win-btn.max::before {
  content: "";
  width: 9px;
  height: 9px;
  border: 1px solid #8a8a8a;
  border-radius: 1px;
}

.win-btn.close {
  font-size: 12px;
}

.menubar {
  height: 24px;
  flex: none;
  display: grid;
  grid-template-columns: 18px 43px 50px 82px 52px 116px 52px 41px 1fr;
  align-items: center;
}

.grip {
  width: 3px;
  height: 11px;
  margin: 0 4px 0 2px;
  flex: none;
  background: repeating-linear-gradient(#b8b49c 0 1px, transparent 1px 2px);
}

.menu-item {
  white-space: nowrap;
}

.toolbar {
  height: 24px;
  flex: none;
  display: flex;
  align-items: center;
}

.toolbar.tall {
  height: 28px;
  padding-bottom: 4px;
  box-sizing: border-box;
}

.tb {
  width: 23px;
  height: 22px;
  flex: none;
  display: flex;
  align-items: center;
  justify-content: center;
  box-sizing: border-box;
}

.tb.pressed {
  background: #e2dfcc;
  border: 1px solid #b4b098;
}

.sep {
  width: 5px;
  height: 20px;
  flex: none;
  box-sizing: border-box;
  border-right: 1px solid #d8d4bc;
}

.more {
  width: 0;
  height: 0;
  margin: 12px 0 0 4px;
  border: 3px solid transparent;
  border-top: 3px solid #222;
}

.arrow {
  display: inline-block;
  width: 0;
  height: 0;
  border-left: 4px solid transparent;
  border-right: 4px solid transparent;
  border-top: 4px solid #6a5a20;
}

.arrow.up {
  border-top: 0;
  border-bottom: 4px solid #6a5a20;
}

.combo {
  width: 150px;
  height: 19px;
  flex: none;
  display: flex;
  box-sizing: border-box;
  border: 1px solid #b8b08a;
  border-radius: 3px;
  overflow: hidden;
}

.combo-input {
  flex: 1;
  background: #fff;
}

.combo-btn {
  width: 15px;
  display: flex;
  align-items: center;
  justify-content: center;
  background: linear-gradient(#f8f6e6, #e8e4c8);
  border-left: 1px solid #cfc9a6;
}

.combo-btn.x,
.search-x {
  font-size: 10px;
  font-weight: bold;
  color: #6a5410;
}

.workspace {
  flex: 1;
  display: flex;
  min-height: 0;
}

.pane {
  display: flex;
  flex-direction: column;
  flex: none;
}

.left-pane {
  width: 251px;
  margin-left: 1px;
}

.right-pane {
  width: 368px;
  margin-left: 5px;
}

.pane-head {
  height: 17px;
  flex: none;
  background: #adadad;
  display: flex;
  align-items: center;
  padding: 0 3px;
  font-family: "Liberation Sans", sans-serif;
  font-weight: bold;
  font-size: 12px;
  text-rendering: auto;
  color: #3a3a3a;
}

.pane-head.inactive {
  color: #666;
  margin-left: 1px;
}

.pane-head span:first-child { flex: 1; }

.pin {
  width: 3px;
  height: 6px;
  border: 1px solid #fff;
  border-radius: 2px;
  margin-right: 11px;
}

.pane-x {
  font-size: 13px;
  width: 14px;
  color: #2c2c2c;
}

.inactive .pane-x { color: #5a5a5a; }

.pane-tools {
  height: 24px;
  flex: none;
  display: flex;
  align-items: center;
}

.actions {
  width: 65px;
  flex: none;
  padding-left: 3px;
  box-sizing: border-box;
  display: flex;
  align-items: center;
  gap: 4px;
}

.actions .arrow {
  border-top-color: #333;
  border-width: 3px 3px 0 3px;
}

.right-pane .pane-tools { padding-left: 1px; }

.search {
  height: 19px;
  flex: none;
  display: flex;
  align-items: center;
  box-sizing: border-box;
  background: #fff;
  border: 1px solid #c4bd95;
  border-radius: 3px;
  margin-left: -1px;
}

.right-pane .search { margin-left: 0; }

.search-text {
  flex: 1;
  padding-left: 3px;
  font-size: 10.2px;
  color: #a8a8a8;
}

.search-x {
  width: 15px;
  height: 100%;
  font-size: 11px;
  display: flex;
  align-items: center;
  justify-content: center;
  background: #efebd2;
}

.tree {
  flex: 1;
  margin: 2px 0 1px -1px;
  padding-top: 1px;
  box-sizing: border-box;
  background: #fff;
  border: 1px solid #c4bd95;
  white-space: nowrap;
  color: #16161e;
}

.row {
  height: 19px;
  display: flex;
  align-items: center;
  padding-left: 4px;
}

.row .ic { margin-right: 6px; }
.row.lvl1 { padding-left: 23px; }
.row.lvl2 { padding-left: 42px; }

.toggle {
  width: 9px;
  height: 9px;
  line-height: 8px;
  margin: 0 6px 0 -17px;
  border: 1px solid #a8a8a8;
  border-radius: 50%;
  text-align: center;
  font-size: 10px;
  color: #707070;
  flex: none;
  box-sizing: content-box;
}

.selected {
  margin-left: -3px;
  padding: 2px 3px;
  background: #4e66bf;
  color: #f4f4ff;
  outline: 1px dotted #b09a50;
  outline-offset: -1px;
}

.mdi {
  width: 396px;
  flex: none;
  margin: 0 0 1px 4px;
  box-sizing: border-box;
  background: #d6d1bc;
  border-left: 2px solid #6a6a6a;
  border-top: 2px solid #6a6a6a;
}

.tabs {
  height: 19px;
  flex: none;
  margin-top: 1px;
  display: flex;
  align-items: flex-end;
  border-bottom: 1px solid #c4bd95;
  box-sizing: border-box;
}

.tab {
  height: 17px;
  margin-right: 7px;
  display: flex;
  align-items: center;
  justify-content: center;
  box-sizing: border-box;
  background: #eeebdb;
  border: 1px solid #c4bd95;
  border-bottom: 0;
  border-radius: 5px 5px 0 0;
}

.tab.active {
  height: 19px;
  width: 76px;
  margin-bottom: -1px;
  background: #fff;
  border-top: 2px solid #f3d080;
}

.tab.data { width: 63px; }
.tab.view { width: 101px; }

.form {
  flex: 1;
  background: #fff;
  padding: 2px 4px 0 10px;
  min-height: 0;
}

.frow {
  display: flex;
  align-items: center;
  height: 18px;
  margin-bottom: 2px;
}

.frow.low {
  height: 19px;
  margin-bottom: 1px;
}

.frow.link-row {
  margin-bottom: 0;
}

.flabel {
  width: 76px;
  flex: none;
  box-sizing: border-box;
  padding-left: 1px;
  height: 18px;
  line-height: 18px;
  white-space: nowrap;
}

.flabel.long { width: 123px; }
.flabel.link-label { width: 156px; }

.flabel.hilite {
  background: #4e66bf;
  color: #eef0ff;
}

.field {
  display: flex;
  align-items: center;
  box-sizing: border-box;
  height: 100%;
  padding-left: 3px;
  background: #fff;
  border: 1px solid #c4bd95;
  border-radius: 3px;
  font-size: 11px;
  color: #101020;
  overflow: hidden;
}

.field.wide { width: 278px; }
.field.grow { width: 231px; }

.field.spin {
  width: 55px;
  justify-content: flex-end;
  padding-right: 0;
}

.field-btn {
  width: 15px;
  height: 100%;
  display: flex;
  align-items: center;
  justify-content: center;
  background: linear-gradient(#f8f6e6, #e8e4c8);
  border-left: 1px solid #d8d3b4;
  flex: none;
}

.field-btn.end { margin-left: auto; }
.field-btn.dots { color: #5a4a10; line-height: 10px; }

.spin-btn {
  width: 15px;
  height: 100%;
  margin-left: 2px;
  display: flex;
  flex-direction: column;
  align-items: center;
  justify-content: center;
  gap: 3px;
  background: linear-gradient(#f8f6e6, #e8e4c8);
}

.check {
  width: 13px;
  height: 13px;
  box-sizing: border-box;
  border: 1px solid #a8a078;
  border-radius: 3px;
  background: #fff;
}

.hr {
  height: 1px;
  margin: 9px 1px 5px 2px;
  background: #dcd8c2;
}

.hr.second {
  margin: 5px 1px 6px 0;
}

.link {
  color: #3a3a28;
  text-decoration: underline;
}

.comment {
  height: 50px;
  flex: none;
  margin: 1px 0;
  padding: 3px 2px;
  box-sizing: border-box;
  background: #fbf9ea;
  border: 1px solid #c4bd95;
  border-radius: 3px;
  color: #14141e;
}

.statusbar {
  height: 20px;
  flex: none;
  display: flex;
  align-items: center;
  padding-top: 1px;
  box-sizing: border-box;
}

.status-text {
  width: 893px;
  height: 18px;
  line-height: 17px;
  padding-left: 4px;
  box-sizing: border-box;
  border: 1px solid #e6e2c8;
  border-left: 0;
  color: #3a3a30;
}

.second .status-text { font-size: 11.4px; }

.status-box {
  height: 18px;
  line-height: 17px;
  margin-left: 5px;
  box-sizing: border-box;
  border: 1px solid #e0dcc2;
  font-size: 11.5px;
  color: #b8ac80;
  text-align: center;
}

.status-box.cap { width: 29px; margin-left: 6px; }
.status-box.num { width: 33px; }

.status-box.lang {
  color: #333;
  display: flex;
  align-items: center;
  gap: 3px;
  width: 24px;
  padding-left: 2px;
}

.lang .arrow {
  border-width: 3px 3px 0 3px;
  border-top-color: #333;
}

.sizegrip {
  width: 13px;
  height: 13px;
  margin: 5px 0 0 auto;
  background: repeating-linear-gradient(135deg, transparent 0 2px, #b8b49c 2px 3px);
  clip-path: polygon(100% 0, 100% 100%, 0 100%);
}

/* dialogs lie over the window */
.dialog {
  position: absolute;
  display: flex;
  flex-direction: column;
  box-sizing: border-box;
  background: #c8c8c8;
  box-shadow: 1px 1px 0 #999, 0 0 0 1px #e0e0e0;
}

.dialog.alert {
  left: 216px;
  top: 274px;
  width: 571px;
  height: 127px;
  border: 1px solid #c8c8c8;
}

.dialog.reorg {
  left: 223px;
  top: 222px;
  width: 445px;
  height: 272px;
  padding: 0 3px 3px;
}

.dialog-head {
  height: 21px;
  flex: none;
  display: flex;
  align-items: center;
  padding: 0 3px 0 5px;
  font-family: "Liberation Sans", sans-serif;
  font-size: 12px;
  font-weight: bold;
  text-rendering: auto;
  color: #3c3c3c;
}

.dialog-head span:first-child { flex: 1; }

.dialog-x {
  font-size: 13px;
  width: 15px;
  color: #2c2c2c;
}

.dialog-max {
  width: 11px;
  height: 10px;
  border: 1px solid #2c2c2c;
  border-top-width: 2px;
  margin-right: 9px;
}

.dialog-body {
  flex: 1;
  background: #fbf9ea;
  border: 1px solid #7a7a7a;
  padding: 14px 14px;
  box-sizing: border-box;
}

.alert-msg {
  display: flex;
  gap: 11px;
}

.warn-ic {
  width: 29px;
  height: 30px;
  flex: none;
}

.alert-text {
  font-size: 10.7px;
  line-height: 13px;
  color: #2e2e2e;
  white-space: nowrap;
}

.alert-btns {
  display: flex;
  justify-content: center;
  gap: 7px;
  margin-top: 13px;
}

.btn {
  width: 94px;
  height: 23px;
  display: flex;
  align-items: center;
  justify-content: center;
  box-sizing: border-box;
  background: linear-gradient(#fbf9ea, #e8e4c9);
  border: 1px solid #bdb691;
  border-radius: 3px;
  color: #4a4a30;
}

.btn.focus {
  outline: 1px dotted #222;
  outline-offset: -2px;
}

.reorg-body {
  flex: 1;
  background: #fbf9ea;
  display: flex;
  padding: 7px 8px;
  gap: 8px;
  min-height: 0;
}

.reorg-main {
  flex: 1;
  display: flex;
  flex-direction: column;
}

.reorg-label {
  height: 20px;
  line-height: 14px;
  color: #3c3c3c;
}

.reorg-list {
  flex: 1;
  background: #fff;
  border: 1px solid #b8b08a;
  padding: 4px 0 0 12px;
  display: flex;
  align-items: flex-start;
  font-size: 10.8px;
  color: #16161e;
}

.tri {
  width: 0;
  height: 0;
  margin: 4px 7px 0 0;
  border-left: 4px solid #3c6a96;
  border-top: 3px solid transparent;
  border-bottom: 3px solid transparent;
}

.reorg-btns {
  width: 80px;
  flex: none;
  display: flex;
  flex-direction: column;
  gap: 7px;
}

.reorg-btns .btn {
  width: 80px;
  height: 20px;
}

.callouts {
  position: absolute;
  left: 0;
  top: 0;
  pointer-events: none;
}

.callout {
  filter: drop-shadow(2px 3px 3px rgba(60, 40, 20, 0.45));
}

.callout-num {
  font-family: "Liberation Sans", sans-serif;
  font-size: 15px;
  fill: #fff;
  text-anchor: middle;
}
```
